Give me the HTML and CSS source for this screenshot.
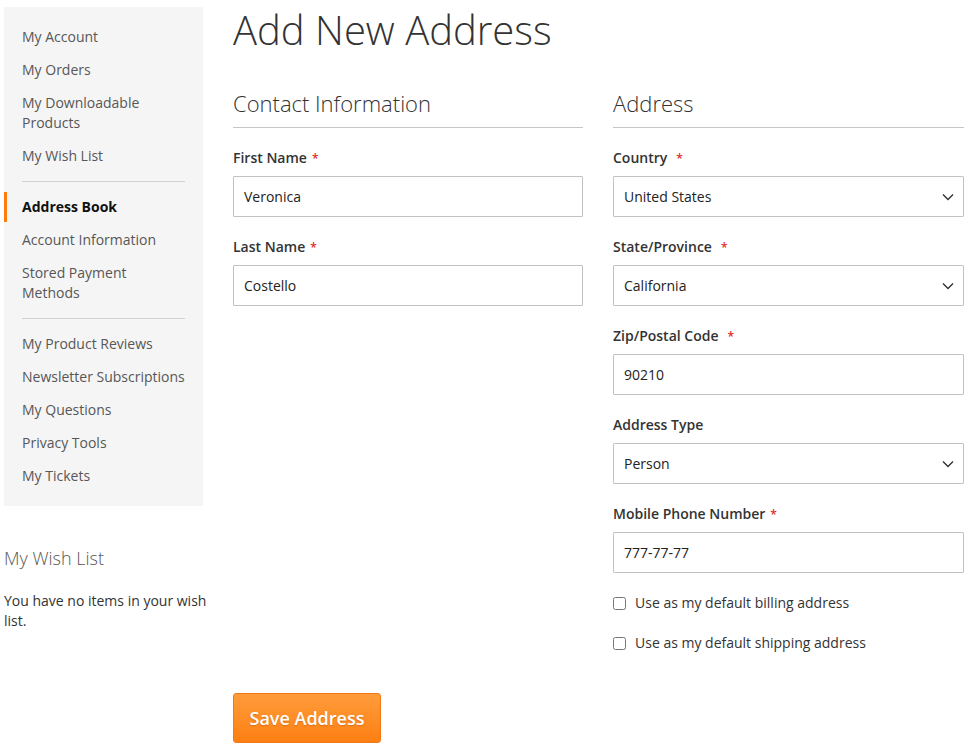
FILE: index.html
```html
<!DOCTYPE html>
<html lang="en">
<head>
<meta charset="utf-8">
<title>Add New Address</title>
<link rel="stylesheet" href="styles.css">
</head>
<body>
<div class="page">
  <aside class="sidebar">
    <nav class="account-nav">
      <ul class="nav-list">
        <li class="nav-item"><a href="#">My Account</a></li>
        <li class="nav-item"><a href="#">My Orders</a></li>
        <li class="nav-item"><a href="#">My Downloadable Products</a></li>
        <li class="nav-item"><a href="#">My Wish List</a></li>
        <li class="delimiter"></li>
        <li class="nav-item current"><strong>Address Book</strong></li>
        <li class="nav-item"><a href="#">Account Information</a></li>
        <li class="nav-item"><a href="#">Stored Payment Methods</a></li>
        <li class="delimiter"></li>
        <li class="nav-item"><a href="#">My Product Reviews</a></li>
        <li class="nav-item"><a href="#">Newsletter Subscriptions</a></li>
        <li class="nav-item"><a href="#">My Questions</a></li>
        <li class="nav-item"><a href="#">Privacy Tools</a></li>
        <li class="nav-item"><a href="#">My Tickets</a></li>
      </ul>
    </nav>
    <div class="wishlist-block">
      <div class="block-title">My Wish List</div>
      <p class="empty">You have no items in your wish list.</p>
    </div>
  </aside>

  <main class="main">
    <h1 class="page-title">Add New Address</h1>
    <form class="address-form">
      <div class="columns">
        <fieldset class="fieldset">
          <div class="legend">Contact Information</div>
          <div class="field">
            <label class="label">First Name<span class="req">*</span></label>
            <input class="input" type="text" value="Veronica">
          </div>
          <div class="field">
            <label class="label">Last Name<span class="req">*</span></label>
            <input class="input" type="text" value="Costello">
          </div>
        </fieldset>

        <fieldset class="fieldset">
          <div class="legend">Address</div>
          <div class="field">
            <label class="label">Country<span class="req wide">*</span></label>
            <div class="select-wrap">
              <select class="input select"><option>United States</option></select>
              <svg class="chevron" width="12" height="8" viewBox="0 0 12 8"><path d="M1 1.5 L6 6.5 L11 1.5" fill="none" stroke="#333" stroke-width="1.4"/></svg>
            </div>
          </div>
          <div class="field">
            <label class="label">State/Province<span class="req wide">*</span></label>
            <div class="select-wrap">
              <select class="input select"><option>California</option></select>
              <svg class="chevron" width="12" height="8" viewBox="0 0 12 8"><path d="M1 1.5 L6 6.5 L11 1.5" fill="none" stroke="#333" stroke-width="1.4"/></svg>
            </div>
          </div>
          <div class="field">
            <label class="label">Zip/Postal Code<span class="req wide">*</span></label>
            <input class="input" type="text" value="90210">
          </div>
          <div class="field">
            <label class="label">Address Type</label>
            <div class="select-wrap">
              <select class="input select"><option>Person</option></select>
              <svg class="chevron" width="12" height="8" viewBox="0 0 12 8"><path d="M1 1.5 L6 6.5 L11 1.5" fill="none" stroke="#333" stroke-width="1.4"/></svg>
            </div>
          </div>
          <div class="field">
            <label class="label">Mobile Phone Number<span class="req">*</span></label>
            <input class="input" type="text" value="777-77-77">
          </div>
          <div class="checks">
            <label class="check"><input type="checkbox" class="checkbox"><span>Use as my default billing address</span></label>
            <label class="check"><input type="checkbox" class="checkbox"><span>Use as my default shipping address</span></label>
          </div>
        </fieldset>
      </div>
      <div class="actions">
        <button type="button" class="btn-primary">Save Address</button>
      </div>
    </form>
  </main>
</div>
</body>
</html>
```
FILE: styles.css
```css
* { box-sizing: border-box; }
html, body { margin: 0; padding: 0; background: #fff; }
body {
  font-family: "Open Sans", "DejaVu Sans", sans-serif;
  font-size: 14px;
  line-height: 20px;
  color: #333;
}
.page {
  display: flex;
  align-items: flex-start;
  padding-left: 4px;
}
.sidebar {
  width: 210px;
  flex: none;
  padding-top: 7px;
}
.account-nav {
  width: 199px;
  background: #f5f5f5;
  padding: 15px 0 12px;
}
.nav-list { list-style: none; margin: 0; padding: 0; }
.nav-item { margin: 0 0 3px; }
.nav-item a, .nav-item strong {
  display: block;
  padding: 5px 18px 5px 15px;
  border-left: 3px solid transparent;
  color: #575757;
  text-decoration: none;
}
.nav-item.current strong {
  border-left-color: #ff7b0d;
  color: #111;
  font-weight: 700;
}
.delimiter {
  border-top: 1px solid #d1d1d1;
  margin: 10px 18px 10px;
}
.wishlist-block { margin-top: 40px; }
.block-title {
  font-size: 18px;
  font-weight: 300;
  line-height: 24px;
  color: #575757;
}
.empty { margin: 21px 0 0; color: #333; }

.main {
  margin-left: 19px;
  width: 731px;
}
.page-title {
  margin: 6px 0 0;
  font-size: 40px;
  line-height: 48px;
  font-weight: 300;
  color: #333;
}
.address-form { margin-top: 36px; }
.columns {
  display: grid;
  grid-template-columns: 350px 351px;
  column-gap: 30px;
  align-items: start;
}
.fieldset { border: 0; margin: 0; padding: 0; min-width: 0; }
.legend {
  font-size: 22px;
  font-weight: 300;
  line-height: 26px;
  color: #333;
  padding-bottom: 11px;
  border-bottom: 1px solid #c6c6c6;
  margin-bottom: 20px;
}
.field { margin-bottom: 20px; }
.label {
  display: block;
  height: 20px;
  font-weight: 600;
  color: #333;
  margin-bottom: 8px;
}
.req {
  color: #e02b27;
  margin-left: 5px;
  font-size: 12px;
  line-height: 0;
}
.req.wide { margin-left: 9px; }
.input {
  display: block;
  width: 100%;
  height: 41px;
  border: 1px solid #c2c2c2;
  border-radius: 1px;
  background: #fff;
  padding: 0 10px;
  font-family: "Open Sans", "DejaVu Sans", sans-serif;
  font-size: 14px;
  color: #222;
  outline: none;
}
.select-wrap { position: relative; }
.select {
  -webkit-appearance: none;
  appearance: none;
  padding-right: 30px;
}
.chevron {
  position: absolute;
  right: 10px;
  top: 17px;
  pointer-events: none;
}
.checks {
  display: flex;
  flex-direction: column;
  gap: 20px;
}
.check {
  display: flex;
  align-items: center;
  gap: 9px;
  height: 20px;
  color: #333;
}
.checkbox {
  margin: 0;
  width: 13px;
  height: 13px;
}
.actions { margin-top: 40px; }
.btn-primary {
  width: 148px;
  height: 50px;
  border: 1px solid #f07a18;
  border-radius: 3px;
  background: linear-gradient(#ff9c3b, #fd7f12);
  color: #fff;
  font-family: "Open Sans", "DejaVu Sans", sans-serif;
  font-size: 18px;
  font-weight: 600;
  text-shadow: 0 1px 1px rgba(150, 70, 0, 0.35);
  cursor: pointer;
  padding: 0;
}
```
